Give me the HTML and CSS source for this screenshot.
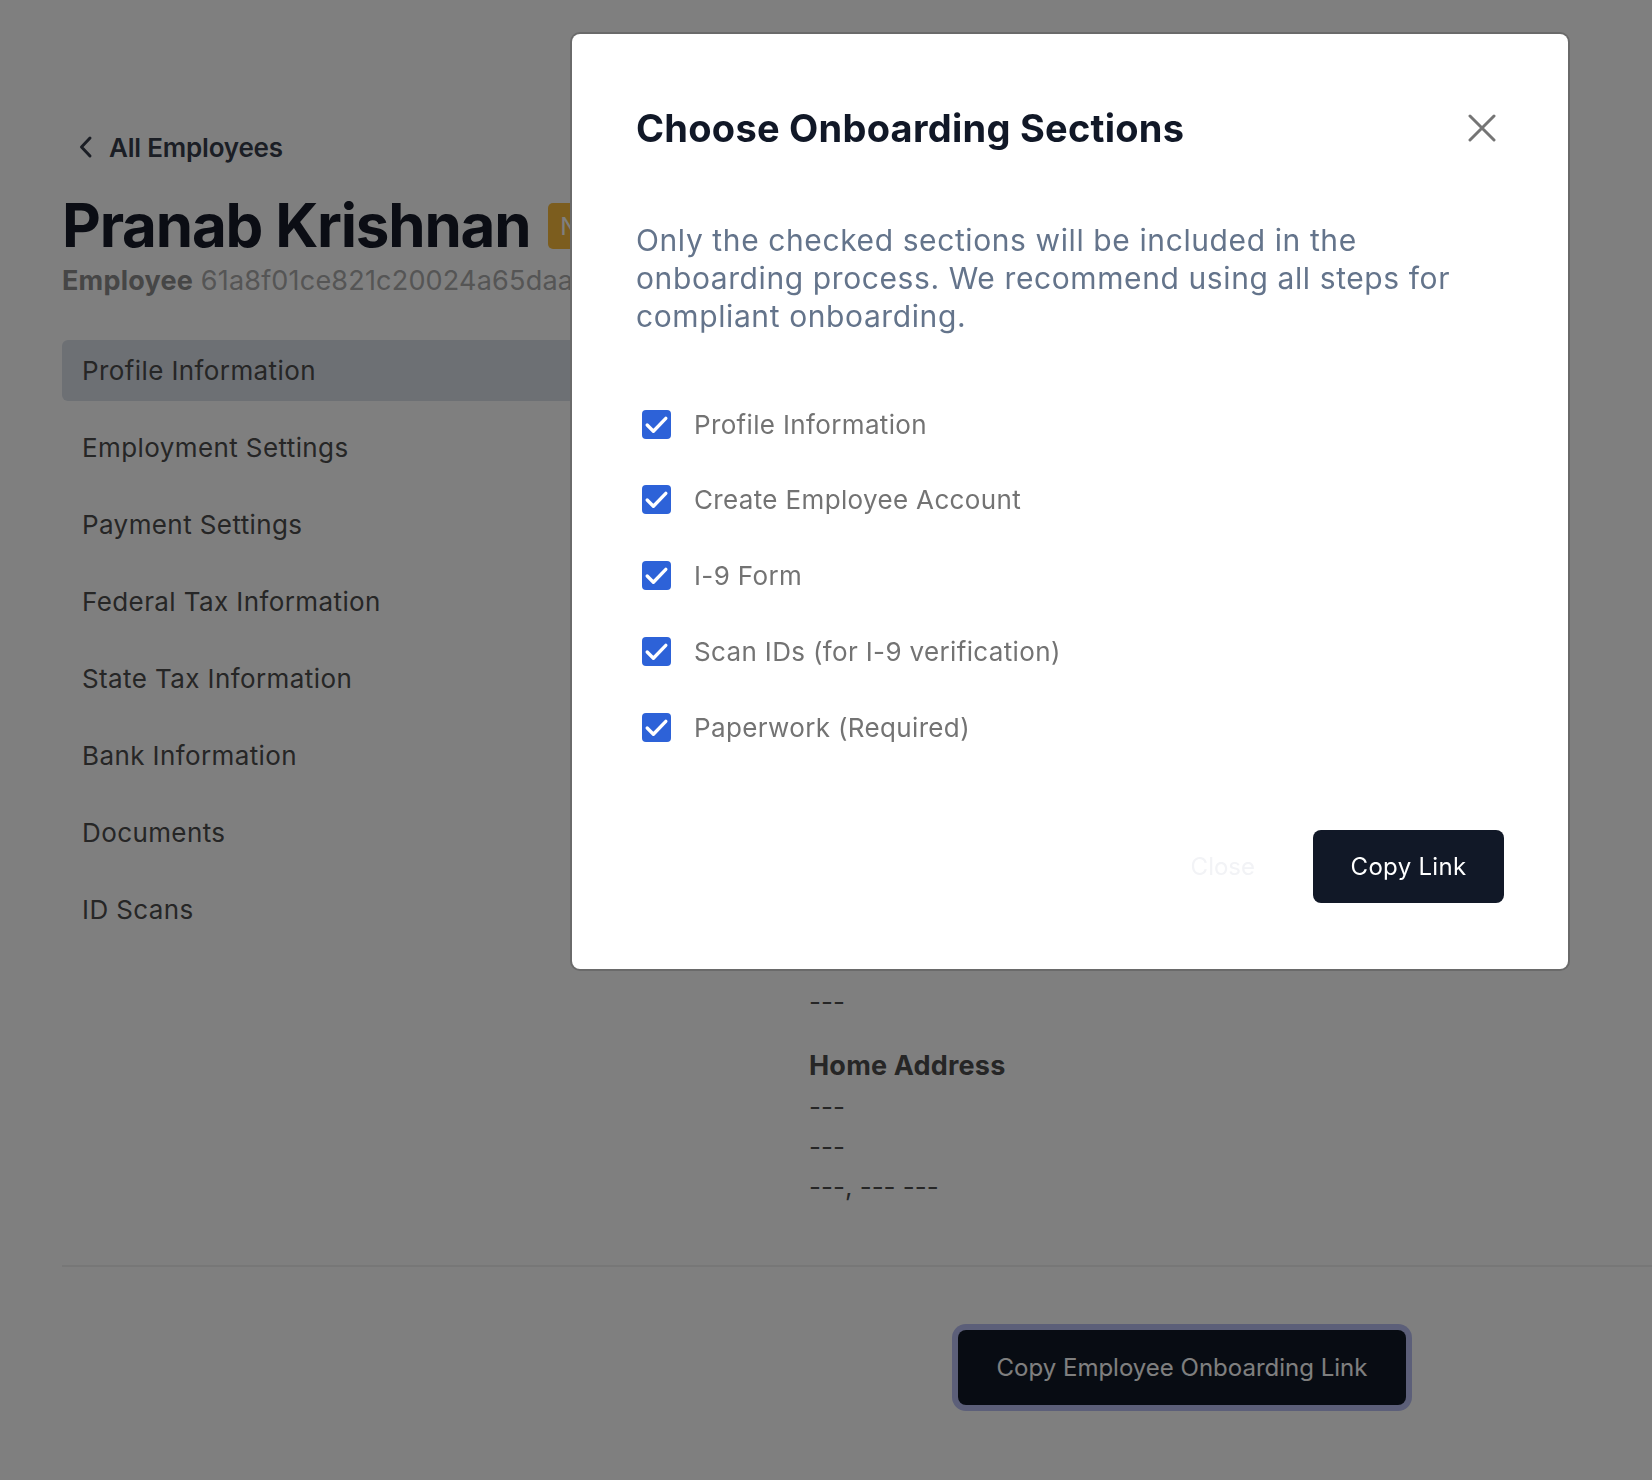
FILE: index.html
```html
<!DOCTYPE html>
<html lang="en">
<head>
<meta charset="utf-8">
<title>Employee – Pranab Krishnan</title>
<link rel="stylesheet" href="styles.css">
</head>
<body>
<div class="page">
  <a class="back" href="#">
    <svg class="back-icon" width="16" height="24" viewBox="0 0 16 24" aria-hidden="true"><polyline points="12,3 3.5,12 12,21" fill="none" stroke="currentColor" stroke-width="3" stroke-linecap="round" stroke-linejoin="round"/></svg>
    <span>All Employees</span>
  </a>
  <div class="title-row">
    <h1 class="name">Pranab Krishnan</h1>
    <span class="badge">New Hire</span>
  </div>
  <div class="subtitle"><b>Employee</b> 61a8f01ce821c20024a65daa</div>

  <div class="layout">
    <nav class="sidenav">
      <a class="nav-item active" href="#">Profile Information</a>
      <a class="nav-item" href="#">Employment Settings</a>
      <a class="nav-item" href="#">Payment Settings</a>
      <a class="nav-item" href="#">Federal Tax Information</a>
      <a class="nav-item" href="#">State Tax Information</a>
      <a class="nav-item" href="#">Bank Information</a>
      <a class="nav-item" href="#">Documents</a>
      <a class="nav-item" href="#">ID Scans</a>
    </nav>
    <section class="details">
      <div class="field"><div class="label">First Name</div><div class="value">Pranab</div></div>
      <div class="field"><div class="label">Last Name</div><div class="value">Krishnan</div></div>
      <div class="field"><div class="label">Email</div><div class="value">---</div></div>
      <div class="field"><div class="label">Phone Number</div><div class="value">---</div></div>
      <div class="field"><div class="label">Social Security Number</div><div class="value">---</div></div>
      <div class="field"><div class="label">Date of Birth</div><div class="value">---</div></div>
      <div class="field">
        <div class="label">Home Address</div>
        <div class="value">---</div>
        <div class="value">---</div>
        <div class="value">---, --- ---</div>
      </div>
    </section>
  </div>

  <div class="page-footer">
    <button class="btn-dark btn-ring" type="button">Copy Employee Onboarding Link</button>
  </div>
</div>

<div class="overlay"></div>

<div class="modal" role="dialog" aria-labelledby="modal-title">
  <div class="modal-head">
    <h2 id="modal-title" class="modal-title">Choose Onboarding Sections</h2>
    <button class="icon-btn" type="button" aria-label="Close">
      <svg width="28" height="28" viewBox="0 0 28 28" aria-hidden="true"><path d="M2 2 L26 26 M26 2 L2 26" fill="none" stroke="currentColor" stroke-width="3" stroke-linecap="round"/></svg>
    </button>
  </div>
  <p class="modal-desc">Only the checked sections will be included in the onboarding process. We recommend using all steps for compliant onboarding.</p>
  <ul class="checklist">
    <li class="check-row"><span class="checkbox"><svg width="29" height="29" viewBox="0 0 28 28" aria-hidden="true"><polyline points="5,14.5 11,20.5 23,8" fill="none" stroke="#fff" stroke-width="3.2" stroke-linecap="round" stroke-linejoin="round"/></svg></span><span class="check-label">Profile Information</span></li>
    <li class="check-row"><span class="checkbox"><svg width="29" height="29" viewBox="0 0 28 28" aria-hidden="true"><polyline points="5,14.5 11,20.5 23,8" fill="none" stroke="#fff" stroke-width="3.2" stroke-linecap="round" stroke-linejoin="round"/></svg></span><span class="check-label">Create Employee Account</span></li>
    <li class="check-row"><span class="checkbox"><svg width="29" height="29" viewBox="0 0 28 28" aria-hidden="true"><polyline points="5,14.5 11,20.5 23,8" fill="none" stroke="#fff" stroke-width="3.2" stroke-linecap="round" stroke-linejoin="round"/></svg></span><span class="check-label">I-9 Form</span></li>
    <li class="check-row"><span class="checkbox"><svg width="29" height="29" viewBox="0 0 28 28" aria-hidden="true"><polyline points="5,14.5 11,20.5 23,8" fill="none" stroke="#fff" stroke-width="3.2" stroke-linecap="round" stroke-linejoin="round"/></svg></span><span class="check-label">Scan IDs (for I-9 verification)</span></li>
    <li class="check-row"><span class="checkbox"><svg width="29" height="29" viewBox="0 0 28 28" aria-hidden="true"><polyline points="5,14.5 11,20.5 23,8" fill="none" stroke="#fff" stroke-width="3.2" stroke-linecap="round" stroke-linejoin="round"/></svg></span><span class="check-label">Paperwork (Required)</span></li>
  </ul>
  <div class="modal-foot">
    <button class="btn-ghost" type="button">Close</button>
    <button class="btn-dark btn-copy" type="button">Copy Link</button>
  </div>
</div>
</body>
</html>
```

FILE: styles.css
```css
* { box-sizing: border-box; }

html, body {
  margin: 0;
  padding: 0;
  background: #ffffff;
}

body {
  font-family: Inter, "Noto Sans", "Liberation Sans", sans-serif;
  color: #111827;
  overflow: hidden;
  height: 1480px;
}

.page {
  padding: 118px 0 0 62px;
}

/* back link */
.back {
  display: flex;
  align-items: center;
  gap: 15px;
  padding-left: 16px;
  height: 58px;
  color: #363d4a;
  text-decoration: none;
  font-size: 26px;
  font-weight: 600;
  letter-spacing: -0.2px;
}
.back-icon { display: block; }

/* name row */
.title-row {
  display: flex;
  align-items: center;
  gap: 18px;
  height: 78px;
  margin-top: 10px;
}
.name {
  margin: 0;
  font-size: 60px;
  font-weight: 700;
  line-height: 78px;
  letter-spacing: -1.2px;
  color: #161b28;
}
.badge {
  display: inline-flex;
  align-items: center;
  height: 46px;
  padding: 0 12px;
  border-radius: 5px;
  background: #f8bb3c;
  color: #ffffff;
  font-size: 24px;
  margin-top: 2px;
}

.subtitle {
  font-size: 27px;
  line-height: 40px;
  color: #aaaaaa;
  margin-top: -3px;
  letter-spacing: 0.2px;
}
.subtitle b {
  font-weight: 700;
  color: #8c8c8c;
}

/* layout */
.layout {
  display: grid;
  grid-template-columns: 700px 1fr;
  column-gap: 47px;
  margin-top: 39px;
  padding-bottom: 58px;
  border-bottom: 2px solid #eeeeee;
}

.sidenav {
  display: flex;
  flex-direction: column;
  gap: 16px;
}
.nav-item {
  display: flex;
  align-items: center;
  height: 61px;
  padding: 0 20px;
  border-radius: 6px;
  color: #4c4c4c;
  text-decoration: none;
  font-size: 26px;
  letter-spacing: 0.4px;
}
.nav-item.active {
  background: #dae0e9;
}

.details {
  padding-top: 75px;
}
.field {
  margin-bottom: 23px;
}
.field:last-child { margin-bottom: 0; }
.label {
  font-size: 27px;
  font-weight: 700;
  line-height: 42px;
  color: #4c4c4c;
  letter-spacing: 0.2px;
}
.value {
  font-size: 26px;
  line-height: 40px;
  color: #4c4c4c;
}

/* footer */
.page-footer {
  display: flex;
  justify-content: flex-end;
  padding: 63px 246px 0 0;
}

.btn-dark {
  border: none;
  background: #111827;
  color: #ffffff;
  font-family: inherit;
  font-size: 24px;
  border-radius: 8px;
  cursor: pointer;
}
.btn-ring {
  width: 448px;
  height: 75px;
  letter-spacing: 0;
  box-shadow: 0 0 0 6px #b8bff2;
}

/* overlay + modal */
.overlay {
  position: fixed;
  inset: 0;
  background: rgba(0, 0, 0, 0.5);
}

.modal {
  position: fixed;
  left: 572px;
  top: 34px;
  width: 996px;
  background: #ffffff;
  border-radius: 8px;
  box-shadow: 0 0 0 2px #6a6a6a;
  padding: 71px 64px 66px;
}

.modal-head {
  display: flex;
  align-items: center;
  justify-content: space-between;
  height: 46px;
}
.modal-title {
  margin: 0;
  font-size: 38px;
  font-weight: 700;
  letter-spacing: 0.25px;
  color: #111827;
}
.icon-btn {
  display: flex;
  align-items: center;
  justify-content: center;
  width: 44px;
  height: 44px;
  padding: 0;
  border: none;
  background: transparent;
  color: #757575;
  cursor: pointer;
}

.modal-desc {
  margin: 70px 0 0;
  font-size: 30px;
  line-height: 38px;
  color: #64748b;
  letter-spacing: 0.6px;
}

.checklist {
  list-style: none;
  margin: 71px 0 0;
  padding: 0;
  display: flex;
  flex-direction: column;
  gap: 39.75px;
}
.check-row {
  display: flex;
  align-items: center;
  height: 36px;
  padding-left: 6px;
}
.checkbox {
  display: flex;
  width: 29px;
  height: 29px;
  border-radius: 4px;
  background: #2d62d8;
}
.checkbox svg { display: block; }
.check-label {
  margin-left: 23px;
  font-size: 26px;
  color: #737373;
  letter-spacing: 0.35px;
}

.modal-foot {
  display: flex;
  justify-content: flex-end;
  align-items: center;
  gap: 24px;
  margin-top: 85px;
}
.btn-ghost {
  height: 73px;
  padding: 0 34px;
  border: none;
  background: transparent;
  color: #f2f3f6;
  font-family: inherit;
  font-size: 24px;
  cursor: pointer;
}
.btn-copy {
  width: 191px;
  height: 73px;
  letter-spacing: 0.3px;
}
```
